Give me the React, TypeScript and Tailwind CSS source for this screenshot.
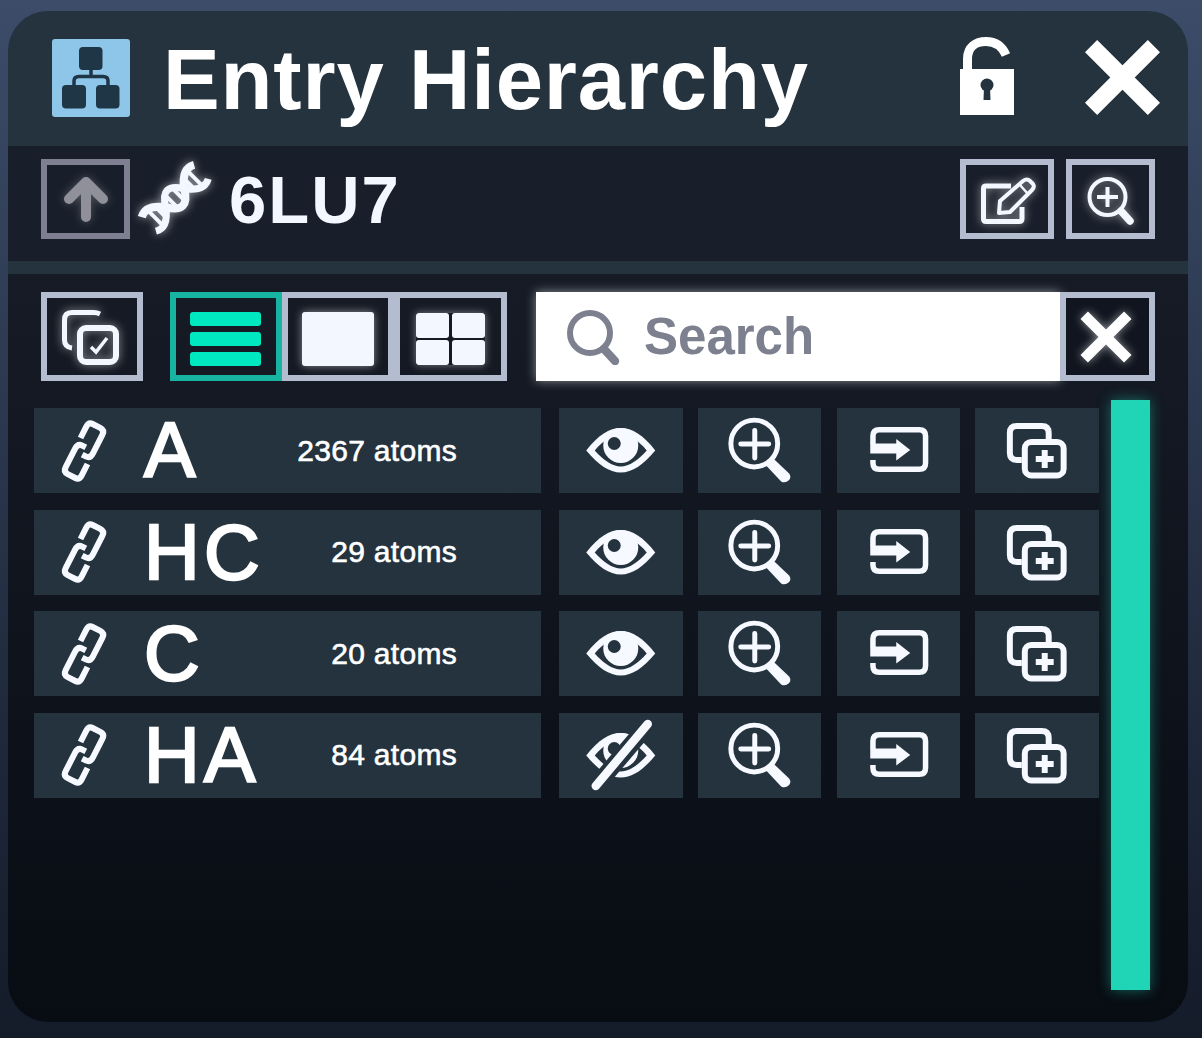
const GLOW = 'drop-shadow-[0_0_5px_rgba(255,255,255,0.55)]'

function HierarchyIcon() {
  return (
    <svg viewBox="0 0 78 78" className="w-[78px] h-[78px] mt-[4px] rounded-[3px] bg-[#8ec6ea] shrink-0">
      <rect x="27" y="8" width="23.5" height="23" rx="4" fill="#1f3646" />
      <rect x="10" y="46" width="24" height="23.5" rx="4" fill="#1f3646" />
      <rect x="44" y="46" width="23.5" height="23.5" rx="4" fill="#1f3646" />
      <path d="M39 30 V37 M22 47 V42 Q22 37.5 27 37.5 H51 Q56 37.5 56 42 V47" fill="none" stroke="#1f3646" strokeWidth="3.5" />
    </svg>
  )
}

function LockIcon() {
  return (
    <svg viewBox="0 0 54 78" className="w-[54px] h-[78px]">
      <path d="M7.5 34 V22 C7.5 10 16 4.5 26 4.5 C36 4.5 42 9 46 18" fill="none" stroke="#fff" strokeWidth="9" />
      <path d="M0 32 H54 V78 H0 Z" fill="#fff" />
      <circle cx="27" cy="48" r="6.500" fill="#24333d" />
      <path d="M24 50 H30 L30.500 63 H23.500 Z" fill="#24333d" />
    </svg>
  )
}

function CloseIcon({ size, width }: { size: number; width: number }) {
  return (
    <svg viewBox="0 0 74 74" style={{ width: size, height: size }}>
      <path d="M6 6 L68 68 M68 6 L6 68" stroke="#fff" strokeWidth={width} fill="none" />
    </svg>
  )
}

function DnaIcon() {
  const rungs = [-28, -20, -5, 5, 20, 28]
  return (
    <svg viewBox="137 160 76 78" className={`w-[76px] h-[78px] ${GLOW}`} fill="none" stroke="#f3f7ff">
      <g transform="translate(175 198) rotate(-45)">
        {rungs.map((u) => (
          <path key={u} d={`M${u} -9 V9`} strokeWidth="4" />
        ))}
        <path d="M-37 -10 C-30 -14 -22 -12 -13 0 C-9 7 -5 11 0 11 C5 11 9 7 13 0 C22 -12 30 -14 37 -10" strokeWidth="8" />
        <path d="M-37 10 C-30 14 -22 12 -13 0 C-9 -7 -5 -11 0 -11 C5 -11 9 -7 13 0 C22 12 30 14 37 10" strokeWidth="7" />
      </g>
    </svg>
  )
}

function ToolButton({ className, children }: { className: string; children: React.ReactNode }) {
  return (
    <div className={`border-[6px] border-[#b4bccf] flex items-center justify-center shrink-0 ${className}`}>
      {children}
    </div>
  )
}

function EyeIcon({ off = false }: { off?: boolean }) {
  return (
    <svg viewBox="559 408 123 85" className="w-full h-full">
      <path d="M586 450.500 C598 435 609 428 620.500 428 C632 428 643 435 655 450.500 C643 465 632 472.500 620.500 472.500 C609 472.500 598 465 586 450.500 Z" fill="#f6f9ff" />
      <path d="M594.500 450.500 C603 440 612 435 620.500 435 C629 435 638 440 646.500 450.500 C638 460 629 466.500 620.500 466.500 C612 466.500 603 460 594.500 450.500 Z" fill="#24333e" />
      <circle cx="620.500" cy="445.500" r="17.500" fill="#f6f9ff" />
      <circle cx="614" cy="443.500" r="6.500" fill="#24333e" />
      {off && (
        <>
          <path d="M593 484 L651 416" stroke="#24333e" strokeWidth="17" />
          <path d="M595.500 481 L647.500 419" stroke="#f6f9ff" strokeWidth="8.500" strokeLinecap="round" />
        </>
      )}
    </svg>
  )
}

function ZoomIcon() {
  return (
    <svg viewBox="698 408 124 85" className="w-full h-full" fill="none" stroke="#f6f9ff">
      <circle cx="754.500" cy="443.500" r="23.500" strokeWidth="5" />
      <path d="M741 444 H769 M755 430.500 V458" strokeWidth="5" strokeLinecap="round" />
      <path d="M765 464 L772 457 L789.500 473.500 Q792 477 789.500 480 Q785.500 484 781.500 481.500 Z" fill="#f6f9ff" stroke="none" />
    </svg>
  )
}

function EnterIcon() {
  return (
    <svg viewBox="837 408 123 85" className="w-full h-full" fill="none" stroke="#f6f9ff">
      <path d="M872.700 444 V436 Q872.700 429.700 879 429.700 H919 Q925.300 429.700 925.300 436 V463 Q925.300 469.300 919 469.300 H879 Q872.700 469.300 872.700 463 V460" strokeWidth="5.500" />
      <path d="M870 443.500 H896 V439 L910 450 L896 460.500 V453.500 H870 Z" fill="#f6f9ff" stroke="none" />
    </svg>
  )
}

function DuplicateIcon() {
  return (
    <svg viewBox="975 408 124 85" className="w-full h-full" fill="none" stroke="#f6f9ff">
      <path d="M1049 439 V433 Q1049 426 1042 426 H1017 Q1010 426 1010 433 V453 Q1010 460 1017 460 H1022" strokeWidth="6" />
      <rect x="1025" y="442" width="39" height="33.500" rx="6.500" strokeWidth="6" />
      <path d="M1036 459 H1054 M1045 450 V468" strokeWidth="6" />
    </svg>
  )
}

function LinkIcon() {
  return (
    <svg viewBox="56 413 56 78" className="w-[56px] h-[78px] shrink-0" fill="none" stroke="#f6f9ff" strokeWidth="6">
      <g transform="rotate(27 84 452)">
        <path d="M75 442 V429 Q75 424 80 424 H88 Q93 424 93 429 V450 Q93 456 88 456 H84" />
        <path d="M93 462 V475 Q93 480 88 480 H80 Q75 480 75 475 V454 Q75 448 80 448 H84" />
      </g>
    </svg>
  )
}

const chains = [
  { name: 'A', atoms: '2367 atoms', hidden: false },
  { name: 'HC', atoms: '29 atoms', hidden: false },
  { name: 'C', atoms: '20 atoms', hidden: false },
  { name: 'HA', atoms: '84 atoms', hidden: true },
]

function ChainRow({ name, atoms, hidden }: { name: string; atoms: string; hidden: boolean }) {
  const cell = 'w-[123.500px] h-[85px] bg-[#24333e] shrink-0'
  return (
    <div className="flex gap-[15.250px] h-[85px]">
      <div className="w-[507px] mr-[2.750px] bg-[#24333e] flex items-center pl-[22px] pr-[84px] text-white shrink-0">
        <LinkIcon />
        <span className="ml-[32px] text-[77px] leading-none tracking-[4.500px] [-webkit-text-stroke:2.4px_white]">{name}</span>
        <span className="ml-auto text-[30px] tracking-[0.3px] leading-none [-webkit-text-stroke:0.6px_white]">{atoms}</span>
      </div>
      <div className={cell}><EyeIcon off={hidden} /></div>
      <div className={cell}><ZoomIcon /></div>
      <div className={cell}><EnterIcon /></div>
      <div className={cell}><DuplicateIcon /></div>
    </div>
  )
}

export default function App() {
  return (
    <div className="w-[1202px] h-[1038px] overflow-hidden bg-gradient-to-b from-[#3c4c69] to-[#141b29] pt-[11px] pl-[8px] font-['Liberation_Sans',Arial,sans-serif]">
      <div className="w-[1180px] h-[1011px] rounded-[40px] overflow-hidden flex flex-col">
        {/* title bar */}
        <header className="h-[135px] shrink-0 bg-[#24333d] flex items-center pl-[44px] pr-[28px] pb-[6px]">
          <HierarchyIcon />
          <h1 className="ml-[33px] mt-[7px] text-[85px] leading-none text-white font-bold tracking-[0.85px]">Entry Hierarchy</h1>
          <div className="ml-auto mr-[71px]"><LockIcon /></div>
          <div className="mt-[4px]"><CloseIcon size={75} width={17} /></div>
        </header>

        {/* entry bar */}
        <div className="h-[115px] shrink-0 bg-[#181e2a] flex items-start pt-[13px] pl-[33px] pr-[33px]">
          <div className="w-[89px] h-[80px] border-[6px] border-[#7e8092] flex items-center justify-center shrink-0">
            <svg viewBox="0 0 46 46" className="w-[46px] h-[46px] drop-shadow-[0_0_5px_rgba(255,255,255,0.25)]" fill="none" stroke="#8f909a" strokeWidth="10" strokeLinecap="round" strokeLinejoin="round">
              <path d="M23 41 V6 M6 23 L23 6 L40 23" />
            </svg>
          </div>
          <div className="ml-[7px] mt-[1px]"><DnaIcon /></div>
          <span className="ml-[16px] mt-[7px] text-[67px] leading-none font-bold text-[#f3f7ff] tracking-[2px]">6LU7</span>
          <ToolButton className="ml-auto w-[94px] h-[80px]">
            <svg viewBox="974 165 68 60" className={`w-[68px] h-[60px] ${GLOW}`} fill="none" stroke="#f3f7ff">
              <path d="M1012 182 H987 Q984.500 182 984.500 184.500 V215 Q984.500 217.500 987 217.500 H1020 Q1023 217.500 1023 215 V203" strokeWidth="5" />
              <path d="M1000 209 L1001 197 L1024 177 Q1028 174 1031 177 L1034 180 Q1036 183 1033 186 L1011 208 Z" strokeWidth="4" strokeLinejoin="round" />
              <path d="M1021 181 L1029 190" strokeWidth="2.500" />
            </svg>
          </ToolButton>
          <ToolButton className="ml-[12px] w-[89px] h-[80px]">
            <svg viewBox="1077 165 68 60" className={`w-[68px] h-[60px] ${GLOW}`} fill="none" stroke="#f3f7ff">
              <circle cx="1107.500" cy="193" r="18" strokeWidth="4" />
              <path d="M1097 193 H1118 M1107.500 183 V203" strokeWidth="4" />
              <path d="M1121 207 L1130 217" strokeWidth="7.500" strokeLinecap="round" />
            </svg>
          </ToolButton>
        </div>

        <div className="h-[13px] shrink-0 bg-[#24333d]" />

        {/* list area */}
        <div className="flex-1 bg-gradient-to-b from-[#161b26] to-[#080c13] pt-[18px]">
          <div className="flex h-[89px] pl-[33px] pr-[33px]">
            <ToolButton className="w-[102px] h-[89px]">
              <svg viewBox="55 300 76 72" className={`w-[76px] h-[72px] ${GLOW}`} fill="none" stroke="#f3f7ff">
                <path d="M101 313 Q98 311.500 95 311.500 H73 Q65.500 311.500 65.500 319 V339 Q65.500 346 73 347" strokeWidth="5" />
                <rect x="81" y="327" width="36" height="34" rx="6" strokeWidth="6" />
                <path d="M92 346 L97 351 L108 337" strokeWidth="3.500" />
              </svg>
            </ToolButton>
            <div className="flex ml-[27px]">
              <div className="w-[112px] h-[89px] border-[6px] border-[#17b5a1] flex flex-col items-center justify-center gap-[6px] pt-[5px] pr-[1px] shrink-0">
                <div className="w-[71px] h-[14px] rounded-[3px] bg-[#00e8c0]" />
                <div className="w-[71px] h-[14px] rounded-[3px] bg-[#00e8c0]" />
                <div className="w-[71px] h-[14px] rounded-[3px] bg-[#00e8c0]" />
              </div>
              <ToolButton className="w-[112px] h-[89px] pt-[5px]">
                <div className="w-[72px] h-[54px] rounded-[3px] bg-[#f3f7ff] shadow-[0_0_8px_rgba(255,255,255,0.5)]" />
              </ToolButton>
              <ToolButton className="w-[113px] h-[89px] pt-[5px]">
                <div className="grid grid-cols-2 gap-[2.500px] shadow-[0_0_8px_rgba(255,255,255,0.45)]">
                  <div className="w-[33px] h-[25px] rounded-[3px] bg-[#f3f7ff]" />
                  <div className="w-[33px] h-[25px] rounded-[3px] bg-[#f3f7ff]" />
                  <div className="w-[33px] h-[25px] rounded-[3px] bg-[#f3f7ff]" />
                  <div className="w-[33px] h-[25px] rounded-[3px] bg-[#f3f7ff]" />
                </div>
              </ToolButton>
            </div>
            <div className="ml-[29px] w-[524px] h-[89px] bg-white shadow-[0_0_10px_rgba(255,255,255,0.5)] flex items-center pl-[30px] shrink-0">
              <svg viewBox="566 308 56 56" className="w-[56px] h-[56px] shrink-0" fill="none" stroke="#7d808f">
                <circle cx="590" cy="332" r="20" strokeWidth="6" />
                <path d="M604 348 L615 360" strokeWidth="8.500" strokeLinecap="round" />
              </svg>
              <span className="ml-[22px] text-[51px] leading-none font-bold text-[#7d808f]">Search</span>
            </div>
            <ToolButton className="w-[95px] h-[89px] bg-[#10151f]">
              <div className={`${GLOW} mr-[4px]`}><CloseIcon size={52} width={15} /></div>
            </ToolButton>
          </div>

          <div className="flex mt-[19px] pl-[26px]">
            <div className="flex flex-col gap-[16.600px] pt-[8px] w-[1077px] shrink-0">
              {chains.map((c) => (
                <ChainRow key={c.name} {...c} />
              ))}
            </div>
            <div className="w-[39px] h-[590px] bg-[#1fd5b5] shadow-[0_0_14px_rgba(31,213,181,0.45)]" />
          </div>
        </div>
      </div>
    </div>
  )
}
